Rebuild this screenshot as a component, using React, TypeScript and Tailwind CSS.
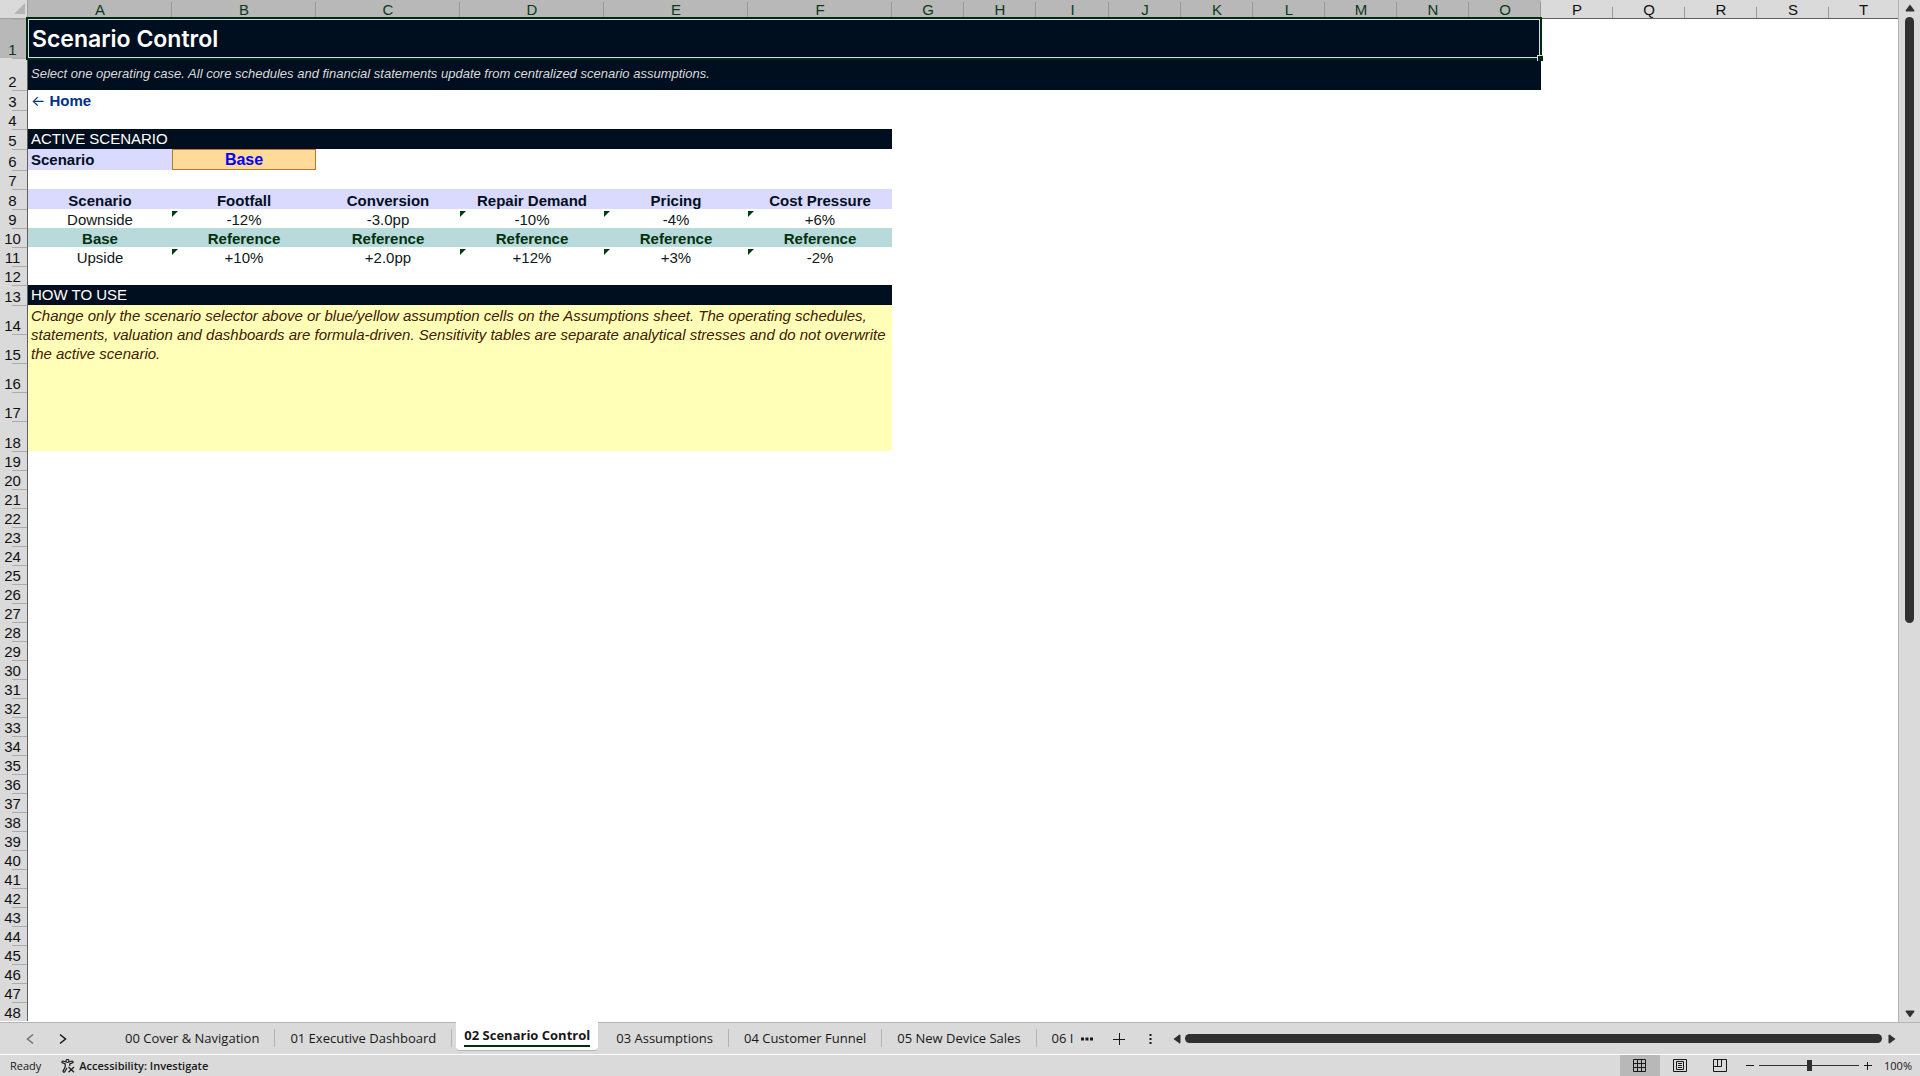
import { ReactNode } from 'react';
import clsx from 'clsx';

const columns = 'ABCDEFGHIJKLMNOPQRST'.split('');
const selectedColumns = 15;

const tabs = [
    '00 Cover & Navigation',
    '01 Executive Dashboard',
    '02 Scenario Control',
    '03 Assumptions',
    '04 Customer Funnel',
    '05 New Device Sales',
    '06 I',
];
const activeTab = '02 Scenario Control';

const headings = ['Scenario', 'Footfall', 'Conversion', 'Repair Demand', 'Pricing', 'Cost Pressure'];
const downside = ['Downside', '-12%', '-3.0pp', '-10%', '-4%', '+6%'];
const base = ['Base', 'Reference', 'Reference', 'Reference', 'Reference', 'Reference'];
const upside = ['Upside', '+10%', '+2.0pp', '+12%', '+3%', '-2%'];

function columnWidth(index: number) {
    if (index < 6) return 'w-[144px]';
    if (index === 8) return 'w-[73px]';
    if (index < columns.length - 1) return 'w-[72px]';
    return '';
}

interface RowProps {
    number: number;
    height?: string;
    selected?: boolean;
    children?: ReactNode;
}

function Row({ number, height = 'h-[19px]', selected, children }: RowProps) {
    return (
        <tr className={height}>
            <th
                scope="row"
                className={clsx(
                    'border-r border-[#606060] bg-linear-to-r from-transparent from-45% to-[#acacac] to-45% bg-[length:100%_1px] bg-no-repeat p-0 pr-0.5 text-center align-bottom font-normal leading-4',
                    selected ? 'bg-[#b8b8b8] text-[#0a3a1a]' : 'bg-[#dadada] text-[#101010]',
                )}
            >
                {number}
            </th>
            {children}
        </tr>
    );
}

interface CellsProps {
    values: string[];
    className?: string;
    flagged?: boolean;
}

function Cells({ values, className, flagged }: CellsProps) {
    return (
        <>
            {values.map((value, index) => (
                <td key={index} className={clsx('relative p-0 text-center align-bottom leading-4', className)}>
                    {flagged && index !== 0 && index !== 2 && (
                        <svg className="absolute left-0 top-0.5 h-1.5 w-1.5 fill-[#003a10]" viewBox="0 0 6 6">
                            <path d="M0 0h6L0 6z" />
                        </svg>
                    )}
                    {value}
                </td>
            ))}
        </>
    );
}

function Sheet() {
    return (
        <div className="min-w-0 flex-1 overflow-hidden border-r border-[#b4b4b4] bg-white">
            <table className="w-full table-fixed border-separate border-spacing-0 text-[15px]">
                <colgroup>
                    <col className="w-7" />
                    {columns.map((column, index) => (
                        <col key={column} className={columnWidth(index)} />
                    ))}
                </colgroup>
                <thead>
                    <tr className="h-[19px]">
                        <td className="border-b border-r border-[#a0a0a0] bg-[#dadada] p-0">
                            <svg className="ml-3.5 h-3 w-3 fill-[#b4b4b4]" viewBox="0 0 12 12">
                                <path d="M11 0v11H0z" />
                            </svg>
                        </td>
                        {columns.map((column, index) => (
                            <th
                                key={column}
                                scope="col"
                                className={clsx(
                                    'border-b border-[#606060] bg-linear-to-b from-transparent to-[#999] bg-[length:1px_100%] bg-right bg-no-repeat p-0 pt-px text-center font-normal leading-4 last:bg-none',
                                    index < selectedColumns
                                        ? 'from-10% to-10% bg-[#b8b8b8] text-[#0a3a1a]'
                                        : 'from-40% to-40% bg-[#dadada] text-[#101010]',
                                )}
                            >
                                {column}
                            </th>
                        ))}
                    </tr>
                </thead>
                <tbody>
                    <Row number={1} height="h-[39px]" selected>
                        <td
                            colSpan={15}
                            className="relative bg-[#000f20] p-0 pl-1 font-[Inter] text-[23px] font-semibold leading-6 text-white"
                        >
                            Scenario Control
                            <div className="absolute -bottom-0.5 -left-0.5 -right-px -top-0.5 border-2 border-[#002a10]">
                                <div className="h-full border border-[#dadaea]" />
                                <div className="absolute -bottom-[3px] -right-[3px] h-1.5 w-1.5 border-l border-t border-[#dadaea] bg-[#002a10]" />
                            </div>
                        </td>
                    </Row>
                    <Row number={2} height="h-8">
                        <td colSpan={15} className="bg-[#000f20] p-0 pl-[3px] text-[13px] italic leading-4 text-[#dadada]">
                            Select one operating case. All core schedules and financial statements update from
                            centralized scenario assumptions.
                        </td>
                    </Row>
                    <Row number={3} height="h-5">
                        <td className="p-0 pl-[3px] pt-px font-bold leading-4 text-[#003088]">
                            <a href="#home">
                                <span className="font-[Inter] font-normal">←</span> Home
                            </a>
                        </td>
                    </Row>
                    <Row number={4} />
                    <Row number={5} height="h-5">
                        <td colSpan={6} className="bg-[#000f20] p-0 pl-[3px] leading-4 text-white">
                            ACTIVE SCENARIO
                        </td>
                    </Row>
                    <Row number={6} height="h-[21px]">
                        <td className="bg-[#dadaff] p-0 pl-[3px] font-bold leading-4 text-[#000f20]">Scenario</td>
                        <td className="bg-[#ffda98] p-0 text-center text-base font-bold leading-4 text-[#0000ff] outline outline-[#b87828] -outline-offset-1">
                            Base
                        </td>
                    </Row>
                    <Row number={7} />
                    <Row number={8} height="h-5">
                        <Cells values={headings} className="bg-[#dadaff] font-bold text-[#000f20]" />
                    </Row>
                    <Row number={9}>
                        <Cells values={downside} className="text-[#101820]" flagged />
                    </Row>
                    <Row number={10}>
                        <Cells values={base} className="bg-[#b8dada] font-bold text-[#003010]" />
                    </Row>
                    <Row number={11}>
                        <Cells values={upside} className="text-[#101820]" flagged />
                    </Row>
                    <Row number={12} />
                    <Row number={13} height="h-5">
                        <td colSpan={6} className="bg-[#000f20] p-0 pl-[3px] leading-4 text-white">
                            HOW TO USE
                        </td>
                    </Row>
                    <Row number={14} height="h-[29px]">
                        <td
                            colSpan={6}
                            rowSpan={5}
                            className="bg-[#ffffb8] p-0 pl-[3px] pt-px align-top italic leading-[19px] text-[#402000]"
                        >
                            Change only the scenario selector above or blue/yellow assumption cells on the
                            Assumptions sheet. The operating schedules, statements, valuation and dashboards are
                            formula-driven. Sensitivity tables are separate analytical stresses and do not overwrite
                            the active scenario.
                        </td>
                    </Row>
                    {[15, 16, 17].map((number) => (
                        <Row key={number} number={number} height="h-[29px]" />
                    ))}
                    <Row number={18} height="h-[30px]" />
                    {Array.from({ length: 30 }, (_, index) => (
                        <Row key={index} number={index + 19} />
                    ))}
                </tbody>
            </table>
        </div>
    );
}

function VerticalScrollbar() {
    return (
        <div className="flex w-[21px] flex-col items-center bg-[#dadada] py-1 text-[#303030]">
            <svg className="h-2 w-2.5 fill-current" viewBox="0 0 10 8">
                <path d="M5 0.5 9.5 6.5Q9.5 7.5 8.5 7.5H1.5Q.5 7.5.5 6.5z" />
            </svg>
            <div className="mt-[5px] flex w-[9px] flex-1 flex-col">
                <div className="h-[61%] rounded-full bg-[#303030]" />
            </div>
            <svg className="h-2 w-2.5 fill-current" viewBox="0 0 10 8">
                <path d="M5 7.5 9.5 1.5Q9.5.5 8.5.5H1.5Q.5.5.5 1.5z" />
            </svg>
        </div>
    );
}

function TabBar() {
    return (
        <div className="flex h-8 shrink-0 border-t border-[#b4b4b4] bg-[#dadada] text-[#181818]">
            <div className="flex w-[110px] shrink-0 items-center gap-5 pl-6">
                <button type="button" aria-label="Previous sheet" className="text-[#707070]">
                    <svg className="h-3 w-3 fill-none stroke-current stroke-[1.5]" viewBox="0 0 12 12">
                        <path d="M9 1.5 3.5 6 9 10.5" />
                    </svg>
                </button>
                <button type="button" aria-label="Next sheet">
                    <svg className="h-3 w-3 fill-none stroke-current stroke-[1.5]" viewBox="0 0 12 12">
                        <path d="M4 1.5 9.5 6 4 10.5" />
                    </svg>
                </button>
            </div>
            <div className="flex items-start font-['Open_Sans'] text-[13px]">
                {tabs.map((tab) =>
                    tab === activeTab ? (
                        <button
                            key={tab}
                            type="button"
                            className="-mt-px ml-1 mr-[3px] h-[29px] whitespace-nowrap rounded-b border-b border-[#b4b4b4] bg-white px-2 font-bold"
                        >
                            <span className="block border-b-2 border-[#003010] leading-5">{tab}</span>
                        </button>
                    ) : (
                        <button
                            key={tab}
                            type="button"
                            className="mt-1.5 h-[18px] whitespace-nowrap border-r border-[#b4b4b4] px-[15px] leading-[18px] last:border-0 last:pr-1.5"
                        >
                            {tab}
                        </button>
                    ),
                )}
            </div>
            <div className="flex items-center">
                <button type="button" aria-label="More sheets" className="pl-0.5">
                    <svg className="h-3 w-3 fill-current" viewBox="0 0 12 12">
                        <path d="M0 4.5h3v3H0zM4.5 4.5h3v3h-3zM9 4.5h3v3H9z" />
                    </svg>
                </button>
                <button type="button" aria-label="New sheet" className="ml-5">
                    <svg className="h-3 w-3 fill-none stroke-current" viewBox="0 0 12 12">
                        <path d="M6.5 0v12M0 6.5h12" />
                    </svg>
                </button>
                <span className="ml-5 flex h-3 w-3 items-center justify-center">
                    <svg className="h-3 w-1 fill-current" viewBox="0 0 4 12">
                        <path d="M.5 1h2v2h-2zM.5 5h2v2h-2zM.5 9h2v2h-2z" />
                    </svg>
                </span>
            </div>
            <div className="flex flex-1 items-center gap-1 pl-4 pr-6 text-[#303030]">
                <svg className="h-2.5 w-2 fill-current" viewBox="0 0 8 10">
                    <path d="M.5 5 6.5.5Q7.5.5 7.5 1.5V8.5Q7.5 9.5 6.5 9.5z" />
                </svg>
                <div className="h-[9px] flex-1 rounded-full bg-[#303030]" />
                <svg className="ml-0.5 h-2.5 w-2 fill-current" viewBox="0 0 8 10">
                    <path d="M7.5 5 1.5.5Q.5.5.5 1.5V8.5Q.5 9.5 1.5 9.5z" />
                </svg>
            </div>
        </div>
    );
}

function StatusBar() {
    return (
        <div className="flex h-[22px] shrink-0 items-center border-t border-white bg-[#dadada] font-['Open_Sans'] text-[11px] leading-4 text-[#181818]">
            <span className="pl-2.5">Ready</span>
            <button type="button" className="ml-5 flex items-center gap-1 font-semibold">
                <svg className="h-3.5 w-3.5 fill-none stroke-current stroke-[1.2]" viewBox="0 0 14 14">
                    <circle cx="6.5" cy="2" r="1.5" />
                    <path d="M5 3 2 2Q.5 2.2 1 3.5L4.2 5V8L2 12.2Q2.2 13.6 3.6 13L6 9" />
                    <path d="M8 3 11 2Q12.5 2.2 12 3.5L8.8 5V7" />
                    <path d="M7.5 8 13 13.3M13 8 7.5 13.3" />
                </svg>
                Accessibility: Investigate
            </button>
            <div className="ml-auto flex h-full items-center">
                <button type="button" aria-label="Normal view" className="flex h-full w-10 items-center justify-center bg-[#b8b8b8]">
                    <svg className="h-3.5 w-3.5 fill-none stroke-current" viewBox="0 0 14 14">
                        <path d="M.5.5h12v12H.5zM4.5.5v12M8.5.5v12M.5 4.5h12M.5 8.5h12" />
                    </svg>
                </button>
                <button type="button" aria-label="Page layout" className="flex h-full w-10 items-center justify-center">
                    <svg className="h-3.5 w-3.5 fill-none stroke-current" viewBox="0 0 14 14">
                        <path d="M.5.5h13v12H.5zM3.5 2.5h7v8h-7zM5 4.5h4M5 6.5h4M5 8.5h4" />
                    </svg>
                </button>
                <button type="button" aria-label="Page break preview" className="flex h-full w-10 items-center justify-center">
                    <svg className="h-3.5 w-3.5 fill-none stroke-current" viewBox="0 0 14 14">
                        <path d="M.5.5h13v12H.5zM4.5.5v7M.5 7.5h8V.5" />
                    </svg>
                </button>
                <button type="button" aria-label="Zoom out" className="ml-1.5">
                    <svg className="h-2 w-2 stroke-current" viewBox="0 0 8 8">
                        <path d="M0 3.5h8" />
                    </svg>
                </button>
                <input
                    type="range"
                    aria-label="Zoom"
                    min={0}
                    max={200}
                    defaultValue={100}
                    className="mx-[5px] h-3 w-[100px] appearance-none bg-linear-to-b from-[#303030] to-[#303030] bg-[length:100%_1px] bg-center bg-no-repeat [&::-webkit-slider-thumb]:h-[11px] [&::-webkit-slider-thumb]:w-[5px] [&::-webkit-slider-thumb]:appearance-none [&::-webkit-slider-thumb]:bg-[#303030]"
                />
                <button type="button" aria-label="Zoom in">
                    <svg className="h-2 w-2 stroke-current" viewBox="0 0 8 8">
                        <path d="M0 3.5h8M3.5 0v8" />
                    </svg>
                </button>
                <span className="pl-3 pr-2">100%</span>
            </div>
        </div>
    );
}

export default function App() {
    return (
        <div className="flex h-screen flex-col overflow-hidden bg-[#dadada] font-['Liberation_Sans',Arial,sans-serif]">
            <div className="flex min-h-0 flex-1">
                <Sheet />
                <VerticalScrollbar />
            </div>
            <TabBar />
            <StatusBar />
        </div>
    );
}
